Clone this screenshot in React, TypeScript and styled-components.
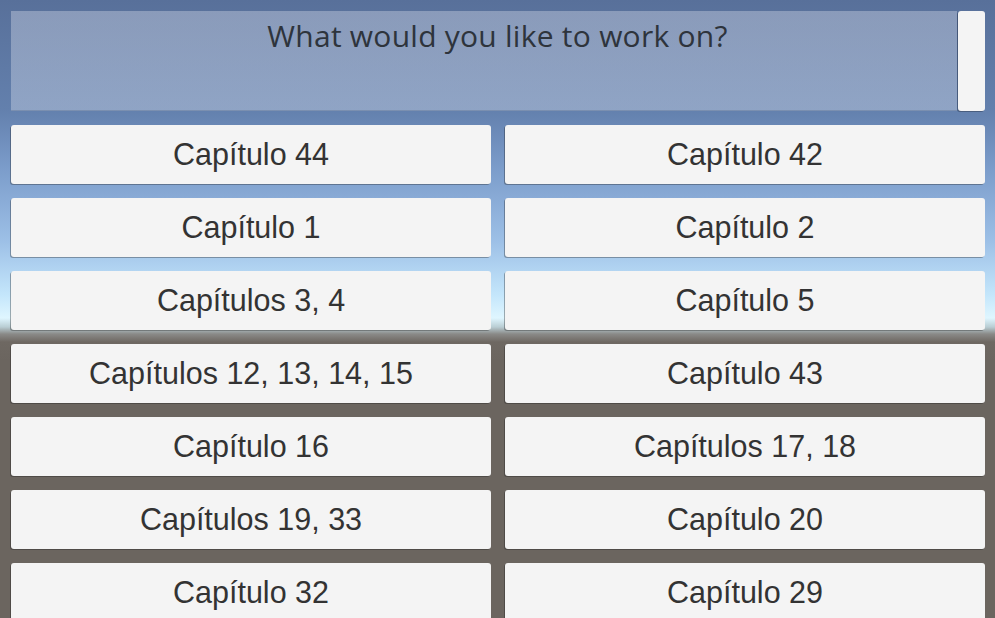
import React from "react";
import styled, {createGlobalStyle} from "styled-components";

const GlobalStyle = createGlobalStyle`
    html, body {
        margin: 0;
        padding: 0;
        height: 100%;
        overflow: hidden;
    }
    #root {
        height: 100%;
    }
`;

const Screen = styled.div`
    height: 618px;
    overflow: hidden;
    box-sizing: border-box;
    padding: 11px 10px 0 11px;
    background: linear-gradient(
        to bottom,
        #58709a 0px,
        #6380ad 110px,
        #7c9dcb 170px,
        #9cbfe6 240px,
        #c4e6fb 295px,
        #dff6ff 318px,
        #b9cdd3 327px,
        #8a8a88 334px,
        #6e6862 342px,
        #6b655f 360px,
        #6b655f 100%
    );
    font-family: "Liberation Sans", Arial, sans-serif;
`;

const Header = styled.div`
    display: flex;
    height: 100px;
    margin-bottom: 14px;
`;

// title is centred over the whole header, scrollbar included
const TitlePanel = styled.div`
    flex: 1;
    background: linear-gradient(to bottom, rgba(196, 204, 222, 0.46), rgba(200, 210, 228, 0.44));
    box-shadow: inset 0 -1px 0 rgba(60, 80, 110, 0.25);
    text-align: center;
    padding: 4px 0 0 27px;
    box-sizing: border-box;
`;

const Title = styled.h1`
    margin: 0;
    font-family: "Open Sans", "Noto Sans", sans-serif;
    font-weight: 400;
    font-size: 30px;
    line-height: 42px;
    color: #2e343c;
    letter-spacing: 0.25px;
`;

const ScrollThumb = styled.div`
    width: 27px;
    margin-left: 1px;
    background: #f4f4f4;
    border-radius: 3px;
    box-shadow: -1px 1px 0 rgba(40, 50, 70, 0.45);
`;

const Grid = styled.div`
    display: grid;
    grid-template-columns: 1fr 1fr;
    grid-auto-rows: 59px;
    gap: 14px;
`;

const ChapterButton = styled.button`
    display: flex;
    align-items: center;
    justify-content: center;
    border: none;
    margin: 0;
    padding: 0;
    background: #f4f4f4;
    border-radius: 3px;
    box-shadow: -1px 1px 0 rgba(30, 30, 30, 0.35);
    font-family: "Liberation Sans", Arial, sans-serif;
    font-size: 30.5px;
    line-height: 1;
    color: #333333;
    cursor: pointer;
`;

const chapters = [
    "Capítulo 44", "Capítulo 42",
    "Capítulo 1", "Capítulo 2",
    "Capítulos 3, 4", "Capítulo 5",
    "Capítulos 12, 13, 14, 15", "Capítulo 43",
    "Capítulo 16", "Capítulos 17, 18",
    "Capítulos 19, 33", "Capítulo 20",
    "Capítulo 32", "Capítulo 29",
];

export default function App() {
    return (
        <>
            <GlobalStyle />
            <Screen>
                <Header>
                    <TitlePanel>
                        <Title>What would you like to work on?</Title>
                    </TitlePanel>
                    <ScrollThumb />
                </Header>
                <Grid>
                    {chapters.map(name => (
                        <ChapterButton key={name}>{name}</ChapterButton>
                    ))}
                </Grid>
            </Screen>
        </>
    );
}
